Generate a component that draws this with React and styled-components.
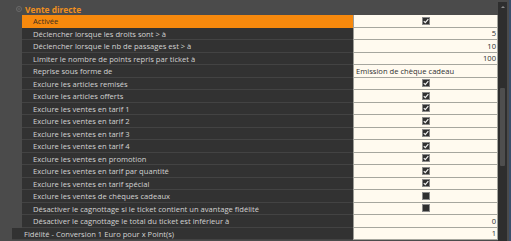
import React from 'react';
import styled, { createGlobalStyle } from 'styled-components';

const Global = createGlobalStyle`
  html, body { margin: 0; padding: 0; background: #4b4b4b; }
  body { font-family: "Open Sans", "Noto Sans", sans-serif; }
`;

const Page = styled.div`
  width: 511px;
  height: 241px;
  overflow: hidden;
  display: flex;
  background: #4b4b4b;
`;

const Tree = styled.div`
  flex: 1;
  display: flex;
  flex-direction: column;
  padding-top: 3px;
`;

const GroupHeader = styled.div`
  height: 12px;
  display: flex;
  align-items: center;
  gap: 3px;
  padding-left: 16px;
  font-size: 8.4px;
  font-weight: 700;
  color: #f0901e;
`;

const Group = styled.div`
  display: flex;
  flex-direction: column;
  padding-left: ${p => p.$indent}px;
`;

const Row = styled.div`
  display: grid;
  grid-template-columns: 1fr 145px;
  height: 12.5px;
  font-size: 7.6px;
  line-height: 12px;
`;

const Label = styled.div`
  background: ${p => (p.$active ? '#f7890d' : '#323232')};
  color: ${p => (p.$active ? '#3a2e22' : '#d2d2d2')};
  border-bottom: 1px solid ${p => (p.$active ? '#f7890d' : '#434343')};
  padding-left: ${p => p.$pad}px;
  white-space: nowrap;
  overflow: hidden;
`;

const Value = styled.div`
  background: #fffaef;
  color: #303030;
  border-left: 1px solid #9c9c96;
  border-right: 1px solid #a6a69e;
  border-bottom: 1px solid #a6a69e;
  display: flex;
  align-items: center;
  justify-content: ${p => p.$align};
  padding: 0 1px 0 2px;
  white-space: nowrap;
  overflow: hidden;
`;

const Scrollbar = styled.div`
  width: 13px;
  display: flex;
  background: #4b4b4b;
`;

const Track = styled.div`
  width: 9px;
  margin-top: 2px;
  background: #2e2e2e;
  display: flex;
  flex-direction: column;
  align-items: center;
`;

const Arrow = styled.div`
  margin-top: 4px;
  width: 0;
  height: 0;
  border-left: 2px solid transparent;
  border-right: 2px solid transparent;
  border-bottom: 2px solid #8a8a8a;
`;

const Thumb = styled.div`
  margin-top: 80px;
  width: 5px;
  height: 78px;
  background: #4e4e4e;
  border-radius: 1px;
`;

const Edge = styled.div`
  width: 2px;
  margin-left: 2px;
  background: #3a4e6a;
`;

const Check = ({ on }) => (
  <svg width="8" height="8" viewBox="0 0 8 8">
    <rect x="0.5" y="0.5" width="7" height="7" fill="#2f2f2f" stroke="#8a8a8a" />
    {on && <path d="M1.8 4.2 L3.3 5.7 L6.3 2.2" stroke="#f2f2f2" strokeWidth="1.2" fill="none" />}
  </svg>
);

const Collapse = () => (
  <svg width="6" height="6" viewBox="0 0 6 6">
    <circle cx="3" cy="3" r="2.5" fill="none" stroke="#6a6a6a" />
    <path d="M1.8 3 H4.2" stroke="#6a6a6a" />
  </svg>
);

const rows = [
  { label: 'Activée', check: true, active: true },
  { label: 'Déclencher lorsque les droits sont > à', num: '5' },
  { label: 'Déclencher lorsque le nb de passages est > à', num: '10' },
  { label: 'Limiter le nombre de points repris par ticket à', num: '100' },
  { label: 'Reprise sous forme de', text: 'Emission de chèque cadeau' },
  { label: 'Exclure les articles remisés', check: true },
  { label: 'Exclure les articles offerts', check: true },
  { label: 'Exclure les ventes en tarif 1', check: true },
  { label: 'Exclure les ventes en tarif 2', check: true },
  { label: 'Exclure les ventes en tarif 3', check: true },
  { label: 'Exclure les ventes en tarif 4', check: true },
  { label: 'Exclure les ventes en promotion', check: true },
  { label: 'Exclure les ventes en tarif par quantité', check: true },
  { label: 'Exclure les ventes en tarif spécial', check: true },
  { label: 'Exclure les ventes de chèques cadeaux', check: false },
  { label: 'Désactiver le cagnottage si le ticket contient un avantage fidélité', check: false },
  { label: 'Désactiver le cagnottage le total du ticket est inférieur à', num: '0' },
];

const renderValue = r => {
  if (r.num !== undefined) return <Value $align="flex-end">{r.num}</Value>;
  if (r.text !== undefined) return <Value $align="flex-start">{r.text}</Value>;
  return (
    <Value $align="center">
      <Check on={r.check} />
    </Value>
  );
};

export default function App() {
  return (
    <>
      <Global />
      <Page>
        <Tree>
          <GroupHeader>
            <Collapse />
            Vente directe
          </GroupHeader>
          <Group $indent={22}>
            {rows.map(r => (
              <Row key={r.label}>
                <Label $active={r.active} $pad={11}>{r.label}</Label>
                {renderValue(r)}
              </Row>
            ))}
          </Group>
          <Group $indent={12}>
            <Row>
              <Label $pad={12}>Fidélité - Conversion 1 Euro pour x Point(s)</Label>
              <Value $align="flex-end">1</Value>
            </Row>
          </Group>
        </Tree>
        <Scrollbar>
          <Track>
            <Arrow />
            <Thumb />
          </Track>
          <Edge />
        </Scrollbar>
      </Page>
    </>
  );
}
